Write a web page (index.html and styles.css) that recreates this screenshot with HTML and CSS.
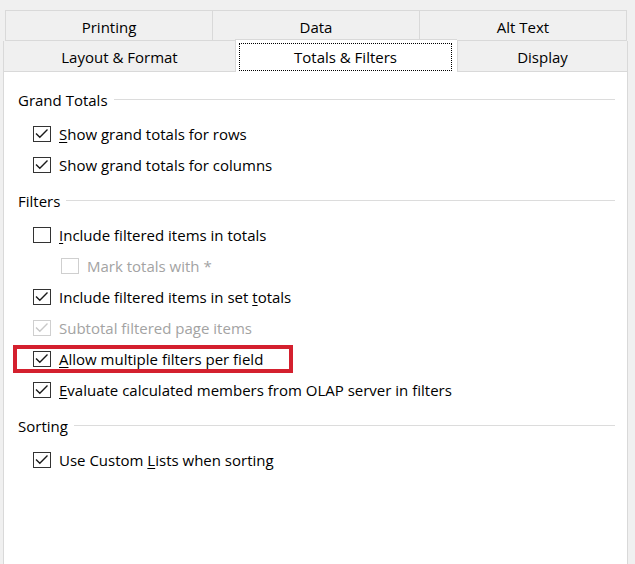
FILE: index.html
```html
<!DOCTYPE html>
<html>
<head>
<meta charset="utf-8">
<link rel="stylesheet" href="styles.css">
</head>
<body>
<div class="dialog">
  <div class="tabrow tabrow-top">
    <div class="tab">Printing</div>
    <div class="tab">Data</div>
    <div class="tab">Alt Text</div>
  </div>
  <div class="tabrow tabrow-bottom">
    <div class="tab tab-layout">Layout &amp; Format</div>
    <div class="tab tab-active"><span class="focus">Totals &amp; Filters</span></div>
    <div class="tab tab-display">Display</div>
  </div>
  <div class="panel">
    <section class="group">
      <div class="group-title"><span>Grand Totals</span></div>
      <div class="row"><span class="cb"><svg viewBox="0 0 18 16"><polyline points="3,7.5 6.8,11.2 14.5,3.5"/></svg></span><span class="label"><u>S</u>how grand totals for rows</span></div>
      <div class="row"><span class="cb"><svg viewBox="0 0 18 16"><polyline points="3,7.5 6.8,11.2 14.5,3.5"/></svg></span><span class="label">Show <u>g</u>rand totals for columns</span></div>
    </section>
    <section class="group">
      <div class="group-title"><span>Filters</span></div>
      <div class="row"><span class="cb"></span><span class="label"><u>I</u>nclude filtered items in totals</span></div>
      <div class="row row-indent disabled"><span class="cb"></span><span class="label">Mark totals with *</span></div>
      <div class="row"><span class="cb"><svg viewBox="0 0 18 16"><polyline points="3,7.5 6.8,11.2 14.5,3.5"/></svg></span><span class="label">Include filtered items in set <u>t</u>otals</span></div>
      <div class="row disabled"><span class="cb"><svg viewBox="0 0 18 16"><polyline points="3,7.5 6.8,11.2 14.5,3.5"/></svg></span><span class="label">Subtotal filtered page items</span></div>
      <div class="row"><span class="cb"><svg viewBox="0 0 18 16"><polyline points="3,7.5 6.8,11.2 14.5,3.5"/></svg></span><span class="label"><u>A</u>llow multiple filters per field</span><span class="highlight"></span></div>
      <div class="row"><span class="cb"><svg viewBox="0 0 18 16"><polyline points="3,7.5 6.8,11.2 14.5,3.5"/></svg></span><span class="label"><u>E</u>valuate calculated members from OLAP server in filters</span></div>
    </section>
    <section class="group">
      <div class="group-title"><span>Sorting</span></div>
      <div class="row"><span class="cb"><svg viewBox="0 0 18 16"><polyline points="3,7.5 6.8,11.2 14.5,3.5"/></svg></span><span class="label">Use Custom <u>L</u>ists when sorting</span></div>
    </section>
  </div>
</div>
</body>
</html>
```

FILE: styles.css
```css
html, body {
  margin: 0;
  padding: 0;
  background: #f0f0f0;
  height: 100%;
  overflow: hidden;
}

.dialog {
  font-family: "Open Sans", "Noto Sans", "Liberation Sans", sans-serif;
  font-size: 15px;
  color: #000;
  padding-top: 10px;
  display: flex;
  flex-direction: column;
  height: 100%;
  box-sizing: border-box;
}

.tabrow {
  display: flex;
}

.tab {
  display: flex;
  align-items: center;
  justify-content: center;
  box-sizing: border-box;
  border: 1px solid #d9d9d9;
  border-right: none;
  background: #f0f0f0;
}

.tabrow-top {
  margin-left: 5px;
  width: 622px;
  height: 31px;
}

.tabrow-top .tab {
  flex: 1;
  padding-top: 2px;
}

.tabrow-top .tab:last-child {
  border-right: 1px solid #d9d9d9;
}

.tabrow-bottom {
  margin-left: 3px;
  width: 625px;
  height: 31px;
  align-items: flex-end;
}

.tabrow-bottom .tab {
  border-top: none;
  height: 31px;
  padding-top: 2px;
}

.tab-layout {
  width: 232px;
}

.tab-active {
  width: 222px;
  height: 33px !important;
  margin-top: -2px;
  background: #fff !important;
  border-top: 1px solid #d9d9d9 !important;
  border-bottom: none;
  padding: 3px 5px 1px 3px !important;
  align-items: stretch !important;
  position: relative;
  z-index: 1;
}

.focus {
  flex: 1;
  border: 1px dotted #000;
  display: flex;
  align-items: center;
  justify-content: center;
}

.tab-display {
  flex: 1;
  border-right: 1px solid #d9d9d9 !important;
}

.panel {
  flex: 1;
  margin-left: 3px;
  width: 625px;
  box-sizing: border-box;
  background: #fff;
  border-left: 1px solid #d9d9d9;
  border-right: 1px solid #d9d9d9;
  padding: 17px 12px 0 14px;
  display: flex;
  flex-direction: column;
  gap: 10px;
}

.group-title {
  height: 22px;
  display: flex;
  align-items: center;
  gap: 6px;
  margin-bottom: 7px;
}

.group-title::after {
  content: "";
  flex: 1;
  height: 1px;
  background: #dcdcdc;
  margin-top: -1px;
}

.row {
  position: relative;
  height: 31px;
  display: flex;
  align-items: center;
  padding-left: 15px;
  white-space: nowrap;
}

.row-indent {
  padding-left: 43px;
}

.label {
  margin-left: 8px;
  padding-top: 1px;
}

.label u {
  text-underline-offset: 2px;
}

.cb {
  width: 18px;
  height: 16px;
  box-sizing: border-box;
  border: 1px solid #333;
  background: #fff;
  position: relative;
  flex: none;
}

.cb svg {
  position: absolute;
  left: -1px;
  top: -1px;
  width: 18px;
  height: 16px;
}

.cb polyline {
  fill: none;
  stroke: #1a1a1a;
  stroke-width: 1.4;
}

.disabled {
  color: #a3a3a3;
}

.disabled .cb {
  border-color: #cfcfcf;
}

.disabled .cb polyline {
  stroke: #c8c8c8;
}

.highlight {
  position: absolute;
  left: -5px;
  top: 2px;
  width: 280px;
  height: 28px;
  box-sizing: border-box;
  border: 4px solid #d4202e;
  pointer-events: none;
}
```
